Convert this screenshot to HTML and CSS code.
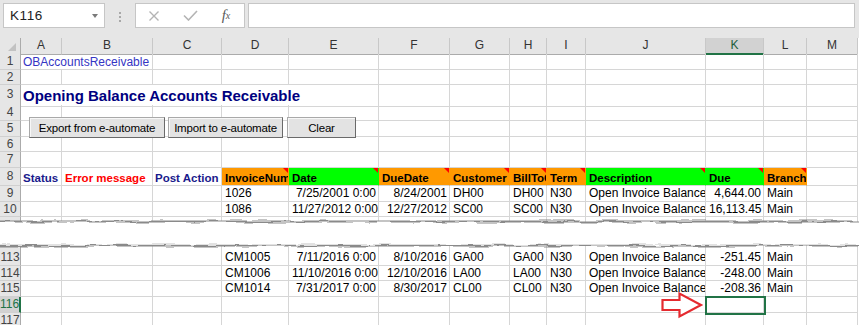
FILE: index.html
```html
<!DOCTYPE html>
<html>
<head>
<meta charset="utf-8">
<link rel="stylesheet" href="styles.css">
</head>
<body>
<div class="fbar">
  <div class="namebox"><span>K116</span><span class="dd"></span></div>
  <div class="dots"><i></i><i></i><i></i></div>
  <div class="fxbox">
    <span class="slot"><svg width="12" height="10" viewBox="0 0 12 10"><path d="M1.5 0.5 L10.5 9.5 M10.5 0.5 L1.5 9.5" stroke="#b4b4b4" stroke-width="1.4" fill="none"/></svg></span>
    <span class="slot"><svg width="15" height="11" viewBox="0 0 15 11"><path d="M1 5.5 L5.5 10 L14 1" stroke="#b4b4b4" stroke-width="1.6" fill="none"/></svg></span>
    <span class="slot fx">f<sub>x</sub></span>
  </div>
  <div class="finput"></div>
</div>

<div class="row colhdr">
  <div class="ch corner"><svg width="8" height="8" viewBox="0 0 8 8"><path d="M8 0 V8 H0 Z" fill="#c2c2c2"/></svg></div>
  <div class="ch">A</div><div class="ch">B</div><div class="ch">C</div><div class="ch">D</div><div class="ch">E</div><div class="ch">F</div><div class="ch">G</div><div class="ch">H</div><div class="ch">I</div><div class="ch">J</div><div class="ch sel">K</div><div class="ch">L</div><div class="ch">M</div>
</div>

<div class="row h16">
  <div class="rh">1</div>
  <div class="c span2 obar">OBAccountsReceivable</div>
  <div class="c"></div><div class="c"></div><div class="c"></div><div class="c"></div><div class="c"></div><div class="c"></div><div class="c"></div><div class="c"></div><div class="c"></div><div class="c"></div><div class="c"></div>
</div>
<div class="row h15">
  <div class="rh">2</div>
  <div class="c"></div><div class="c"></div><div class="c"></div><div class="c"></div><div class="c"></div><div class="c"></div><div class="c"></div><div class="c"></div><div class="c"></div><div class="c"></div><div class="c"></div><div class="c"></div><div class="c"></div>
</div>
<div class="row h20">
  <div class="rh">3</div>
  <div class="c span5 title">Opening Balance Accounts Receivable</div>
  <div class="c"></div><div class="c"></div><div class="c"></div><div class="c"></div><div class="c"></div><div class="c"></div><div class="c"></div><div class="c"></div>
</div>
<div class="row h16">
  <div class="rh">4</div>
  <div class="c"></div><div class="c"></div><div class="c"></div><div class="c"></div><div class="c"></div><div class="c"></div><div class="c"></div><div class="c"></div><div class="c"></div><div class="c"></div><div class="c"></div><div class="c"></div><div class="c"></div>
</div>
<div class="row h16">
  <div class="rh">5</div>
  <div class="c"></div><div class="c"></div><div class="c"></div><div class="c"></div><div class="c"></div><div class="c"></div><div class="c"></div><div class="c"></div><div class="c"></div><div class="c"></div><div class="c"></div><div class="c"></div><div class="c"></div>
</div>
<div class="row h15">
  <div class="rh">6</div>
  <div class="c"></div><div class="c"></div><div class="c"></div><div class="c"></div><div class="c"></div><div class="c"></div><div class="c"></div><div class="c"></div><div class="c"></div><div class="c"></div><div class="c"></div><div class="c"></div><div class="c"></div>
</div>
<div class="row h16">
  <div class="rh">7</div>
  <div class="c"></div><div class="c"></div><div class="c"></div><div class="c"></div><div class="c"></div><div class="c"></div><div class="c"></div><div class="c"></div><div class="c"></div><div class="c"></div><div class="c"></div><div class="c"></div><div class="c"></div>
</div>
<div class="row h18">
  <div class="rh">8</div>
  <div class="c hd navy">Status</div>
  <div class="c hd red">Error message</div>
  <div class="c hd navy">Post Action</div>
  <div class="c hd or cm">InvoiceNum</div>
  <div class="c hd gr cm">Date</div>
  <div class="c hd or cm">DueDate</div>
  <div class="c hd or cm">Customer</div>
  <div class="c hd or cm">BillToC</div>
  <div class="c hd or cm">Term</div>
  <div class="c hd gr cm">Description</div>
  <div class="c hd gr cm">Due</div>
  <div class="c hd or cm">Branch</div>
  <div class="c"></div>
</div>
<div class="row h16">
  <div class="rh">9</div>
  <div class="c"></div><div class="c"></div><div class="c"></div>
  <div class="c">1026</div><div class="c num">7/25/2001 0:00</div><div class="c num">8/24/2001</div><div class="c">DH00</div><div class="c">DH00</div><div class="c">N30</div><div class="c">Open Invoice Balance</div><div class="c num">4,644.00</div><div class="c">Main</div><div class="c"></div>
</div>
<div class="row h15">
  <div class="rh">10</div>
  <div class="c"></div><div class="c"></div><div class="c"></div>
  <div class="c">1086</div><div class="c num">11/27/2012 0:00</div><div class="c num">12/27/2012</div><div class="c">SC00</div><div class="c">SC00</div><div class="c">N30</div><div class="c">Open Invoice Balance</div><div class="c num">16,113.45</div><div class="c">Main</div><div class="c"></div>
</div>

<div class="tear">
  <svg width="859" height="33" viewBox="0 0 859 33">
    <defs>
      <filter id="rough" x="-2%" y="-40%" width="104%" height="180%">
        <feTurbulence type="fractalNoise" baseFrequency="0.045 0.25" numOctaves="3" seed="5" result="noise"/>
        <feDisplacementMap in="SourceGraphic" in2="noise" scale="4.5" xChannelSelector="R" yChannelSelector="G"/>
      </filter>
      <filter id="soft" x="-2%" y="-200%" width="104%" height="500%">
        <feGaussianBlur stdDeviation="1"/>
      </filter>
    </defs>
    <rect x="0" y="0" width="20" height="33" fill="#e6e6e6"/>
    <g stroke="#d6d6d6" stroke-width="1">
      <path d="M61.5 0V33 M152.5 0V33 M221.5 0V33 M288.5 0V33 M378.5 0V33 M449.5 0V33 M509.5 0V33 M546.5 0V33 M585.5 0V33 M705.5 0V33 M763.5 0V33 M806.5 0V33 M857.5 0V33"/>
    </g>
    <path d="M20.5 0V33" stroke="#ababab"/>
    <g filter="url(#rough)">
      <rect x="-10" y="4" width="880" height="25" fill="#ffffff"/>
      <path d="M-10 6.2 H870" stroke="#8a8a8a" stroke-width="2.8" opacity="0.6" filter="url(#soft)"/>
      <path d="M-10 4.5 H870" stroke="#8a8a8a" stroke-width="1.8"/>
      <path d="M-10 26.8 H870" stroke="#8a8a8a" stroke-width="2.8" opacity="0.6" filter="url(#soft)"/>
      <path d="M-10 28.6 H870" stroke="#8a8a8a" stroke-width="1.8"/>
    </g>
  </svg>
</div>

<div class="row h16">
  <div class="rh">113</div>
  <div class="c"></div><div class="c"></div><div class="c"></div>
  <div class="c">CM1005</div><div class="c num">7/11/2016 0:00</div><div class="c num">8/10/2016</div><div class="c">GA00</div><div class="c">GA00</div><div class="c">N30</div><div class="c">Open Invoice Balance</div><div class="c num">-251.45</div><div class="c">Main</div><div class="c"></div>
</div>
<div class="row h15">
  <div class="rh">114</div>
  <div class="c"></div><div class="c"></div><div class="c"></div>
  <div class="c">CM1006</div><div class="c num">11/10/2016 0:00</div><div class="c num">12/10/2016</div><div class="c">LA00</div><div class="c">LA00</div><div class="c">N30</div><div class="c">Open Invoice Balance</div><div class="c num">-248.00</div><div class="c">Main</div><div class="c"></div>
</div>
<div class="row h16">
  <div class="rh">115</div>
  <div class="c"></div><div class="c"></div><div class="c"></div>
  <div class="c">CM1014</div><div class="c num">7/31/2017 0:00</div><div class="c num">8/30/2017</div><div class="c">CL00</div><div class="c">CL00</div><div class="c">N30</div><div class="c">Open Invoice Balance</div><div class="c num">-208.36</div><div class="c">Main</div><div class="c"></div>
</div>
<div class="row h16">
  <div class="rh sel">116</div>
  <div class="c"></div><div class="c"></div><div class="c"></div><div class="c"></div><div class="c"></div><div class="c"></div><div class="c"></div><div class="c"></div><div class="c"></div><div class="c"></div><div class="c"></div><div class="c"></div><div class="c"></div>
</div>
<div class="row h16">
  <div class="rh">117</div>
  <div class="c"></div><div class="c"></div><div class="c"></div><div class="c"></div><div class="c"></div><div class="c"></div><div class="c"></div><div class="c"></div><div class="c"></div><div class="c"></div><div class="c"></div><div class="c"></div><div class="c"></div>
</div>

<div class="btns">
  <button class="btn b1">Export from e-automate</button>
  <button class="btn b2">Import to e-automate</button>
  <button class="btn b3">Clear</button>
</div>

<div class="selbox"></div>

<svg class="arrow" width="44" height="28" viewBox="0 0 44 28">
  <path d="M2.5 9 H19.5 V2.5 L41 14 L19.5 25.5 V19 H2.5 Z" fill="#ffffff" stroke="#e52a2f" stroke-width="2.2" stroke-linejoin="miter"/>
</svg>
</body>
</html>
```

FILE: styles.css
```css
html, body {
  margin: 0;
  padding: 0;
}
body {
  position: relative;
  width: 859px;
  height: 325px;
  overflow: hidden;
  background: #ffffff;
  font-family: "Liberation Sans", Arial, sans-serif;
}

/* formula bar */
.fbar {
  height: 38px;
  box-sizing: border-box;
  background: #e6e6e6;
  display: flex;
  align-items: flex-start;
  padding: 3px 4px 0 3px;
}
.namebox {
  width: 102px;
  height: 25px;
  box-sizing: border-box;
  background: #ffffff;
  border: 1px solid #c6c6c6;
  display: flex;
  align-items: center;
  justify-content: space-between;
  padding: 0 6px 0 6px;
  font-size: 13.5px;
  letter-spacing: 0.6px;
  color: #222222;
}
.dd {
  width: 0;
  height: 0;
  border-left: 3.5px solid transparent;
  border-right: 3.5px solid transparent;
  border-top: 4px solid #7a7a7a;
}
.dots {
  width: 30px;
  display: flex;
  flex-direction: column;
  align-items: center;
  gap: 2px;
  padding-top: 9px;
}
.dots i {
  display: block;
  width: 2px;
  height: 2px;
  background: #a8a8a8;
}
.fxbox {
  width: 110px;
  height: 25px;
  box-sizing: border-box;
  background: #ffffff;
  border: 1px solid #c6c6c6;
  display: flex;
  align-items: center;
}
.slot {
  width: 36px;
  display: flex;
  justify-content: center;
  align-items: center;
}
.fx {
  font-family: "Liberation Serif", "Times New Roman", serif;
  font-style: italic;
  font-size: 15px;
  color: #5a5a5a;
  line-height: 1;
}
.fx sub {
  font-size: 10px;
  vertical-align: -1px;
}
.finput {
  margin-left: 3px;
  flex: 1;
  height: 25px;
  box-sizing: border-box;
  background: #ffffff;
  border: 1px solid #c6c6c6;
}

/* sheet grid */
.row {
  display: grid;
  grid-template-columns: 21px 41px 91px 69px 67px 90px 71px 60px 37px 39px 120px 58px 43px 51px;
}
.h15 { height: 15px; line-height: 14px; }
.h16 { height: 16px; line-height: 15px; }
.h18 { height: 18px; line-height: 17px; }
.h20 { height: 20px; line-height: 19px; }

.colhdr {
  height: 16px;
}
.ch {
  box-sizing: border-box;
  background: #e6e6e6;
  border-right: 1px solid #c8c8c8;
  border-bottom: 1px solid #ababab;
  text-align: center;
  font-size: 12px;
  line-height: 15px;
  color: #333333;
}
.ch.sel {
  background: #d2d2d2;
  border-bottom: 2px solid #217346;
  color: #1d5e3a;
}
.corner {
  display: flex;
  justify-content: flex-end;
  align-items: flex-end;
  padding: 0 4px 3px 0;
  border-right-color: #ababab;
}
.corner svg {
  display: block;
}

.rh {
  box-sizing: border-box;
  background: #e6e6e6;
  border-right: 1px solid #ababab;
  border-bottom: 1px solid #d0d0d0;
  text-align: center;
  font-size: 12px;
  color: #444444;
  white-space: nowrap;
  overflow: hidden;
}
.rh.sel {
  background: #d2d2d2;
  color: #217346;
  border-right: 2px solid #217346;
}

.c {
  box-sizing: border-box;
  border-right: 1px solid #d6d6d6;
  border-bottom: 1px solid #d6d6d6;
  padding: 0 2px 0 3px;
  font-size: 12px;
  color: #000000;
  white-space: nowrap;
  overflow: hidden;
}
.num {
  text-align: right;
  padding-right: 2px;
}
.span2 { grid-column: span 2; }
.span5 { grid-column: span 5; }

.obar {
  color: #3535c4;
  padding-left: 2px;
  padding-top: 1px;
  line-height: 14px;
}
.title {
  font-weight: bold;
  font-size: 15px;
  color: #000080;
  line-height: 21px;
  padding-left: 2px;
  overflow: visible;
}
.hd {
  font-weight: bold;
  font-size: 11.5px;
  padding-top: 2px;
  line-height: 16px;
}
.navy { color: #1a1a8c; padding-left: 2px; }
.red { color: #ff0000; }
.or {
  background: #ff9900;
  border-right-color: #ff9900;
}
.gr {
  background: #00ff00;
  border-right-color: #00ff00;
}
.cm {
  position: relative;
}
.cm::after {
  content: "";
  position: absolute;
  top: 0;
  right: 0;
  width: 0;
  height: 0;
  border-top: 5px solid #ff0000;
  border-left: 5px solid transparent;
}

/* torn edge */
.tear {
  height: 33px;
  overflow: hidden;
}
.tear svg {
  display: block;
}

/* overlays */
.btns {
  position: absolute;
  left: 29px;
  top: 117px;
  display: flex;
}
.btn {
  height: 21px;
  box-sizing: border-box;
  margin: 0;
  padding: 0;
  background: #e3e3e3;
  border: 1px solid #a9a9a9;
  border-right-color: #6a6a6a;
  border-bottom-color: #6a6a6a;
  box-shadow: inset 1px 1px 0 #f7f7f7;
  font-family: "Liberation Sans", Arial, sans-serif;
  font-size: 11.5px;
  letter-spacing: -0.2px;
  color: #000000;
  white-space: nowrap;
}
.b1 { width: 136px; }
.b2 { width: 115px; margin-left: 3px; }
.b3 { width: 69px; margin-left: 4px; }

.selbox {
  position: absolute;
  left: 705px;
  top: 296px;
  width: 61px;
  height: 19px;
  box-sizing: border-box;
  border: 2px solid #217346;
}
.arrow {
  position: absolute;
  left: 660px;
  top: 291px;
  display: block;
}
```
